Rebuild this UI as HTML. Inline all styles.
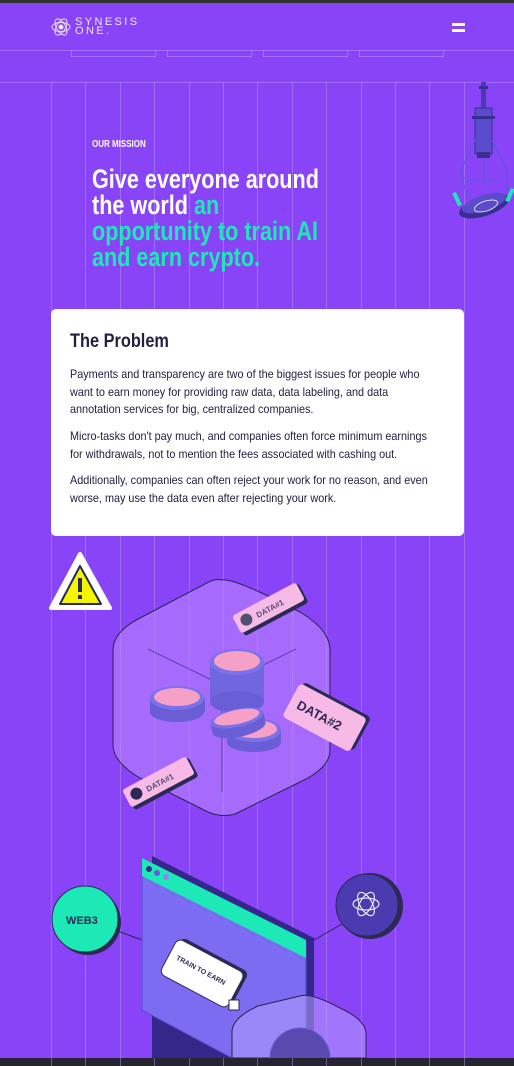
<!DOCTYPE html>
<html><head><meta charset="utf-8">
<style>
*{margin:0;padding:0;box-sizing:border-box}
html,body{width:514px;height:1066px;overflow:hidden;background:#8944f8;font-family:"Liberation Sans",sans-serif}
.abs{position:absolute}
.vl{position:absolute;top:82px;bottom:0;width:1px;background:rgba(190,160,255,.45)}
.hd{transform-origin:0 0;transform:scaleX(.8);white-space:nowrap}
.card{left:51px;top:309px;width:413px;height:227px;background:#fff;border-radius:5px}
.card h2{position:absolute;left:19px;top:22px;font-size:19px;font-weight:bold;color:#232040;transform-origin:0 0;transform:scaleX(.86);white-space:nowrap}
.card p{position:absolute;left:19px;font-size:11.6px;line-height:17.5px;color:#232040;transform-origin:0 0;transform:scaleX(.935);white-space:nowrap}
</style></head><body>
<div class="abs" style="left:0;top:0;width:514px;height:3px;background:#333"></div>
<div class="abs" style="left:0;top:1058px;width:514px;height:8px;background:#262433"></div>
<svg class="abs" style="left:50px;top:16px" width="22" height="22" viewBox="0 0 22 22" fill="none" stroke="#e8ddff" stroke-width="1">
<ellipse cx="11" cy="11" rx="9" ry="4.5"/><ellipse cx="11" cy="11" rx="9" ry="4.5" transform="rotate(60 11 11)"/><ellipse cx="11" cy="11" rx="9" ry="4.5" transform="rotate(120 11 11)"/><circle cx="11" cy="11" r="2" fill="#fff"/></svg>
<div class="abs" style="left:75px;top:18px;color:#eee5ff;font-size:11px;letter-spacing:2.4px;line-height:9px">SYNESIS<br>ONE.</div>
<div class="abs" style="left:452px;top:23px;width:13px;height:3px;background:#fff"></div>
<div class="abs" style="left:452px;top:29px;width:13px;height:3px;background:#fff"></div>
<div class="abs" style="left:0;top:50px;width:514px;height:1px;background:rgba(190,160,255,.5)"></div>
<div class="abs" style="left:71px;top:50px;width:85px;height:7px;border:1px solid rgba(190,160,255,.5);border-top:none"></div>
<div class="abs" style="left:167px;top:50px;width:85px;height:7px;border:1px solid rgba(190,160,255,.5);border-top:none"></div>
<div class="abs" style="left:263px;top:50px;width:85px;height:7px;border:1px solid rgba(190,160,255,.5);border-top:none"></div>
<div class="abs" style="left:359px;top:50px;width:85px;height:7px;border:1px solid rgba(190,160,255,.5);border-top:none"></div>
<div class="abs" style="left:0;top:82px;width:514px;height:1px;background:rgba(190,160,255,.5)"></div>
<div class="vl" style="left:51px"></div><div class="vl" style="left:85px"></div><div class="vl" style="left:120px"></div><div class="vl" style="left:154px"></div><div class="vl" style="left:189px"></div><div class="vl" style="left:223px"></div><div class="vl" style="left:257px"></div><div class="vl" style="left:292px"></div><div class="vl" style="left:326px"></div><div class="vl" style="left:361px"></div><div class="vl" style="left:395px"></div><div class="vl" style="left:429px"></div><div class="vl" style="left:464px"></div>
<svg class="abs" style="left:440px;top:82px" width="74" height="142" viewBox="0 0 74 142">
<rect x="41" y="0" width="5" height="26" fill="#4a3cb0"/><rect x="39" y="4" width="9" height="3" fill="#3a2f90"/>
<rect x="35" y="26" width="17" height="46" fill="#5a4ccc" stroke="#3a2f90"/><rect x="32" y="34" width="23" height="3" fill="#3a2f90"/>
<rect x="37" y="70" width="13" height="6" fill="#3a2f90"/>
<path d="M35 58 L20 90 L28 116 M52 58 L68 90 L66 110 M44 76 L44 106" stroke="#5a5ad8" stroke-width="1.2" fill="none"/>
<path d="M20 90 L26 98 L60 98 L68 90" stroke="#5a5ad8" stroke-width="1" fill="none"/>
<ellipse cx="44" cy="124" rx="26" ry="10" transform="rotate(-18 44 124)" fill="#3a2f90"/>
<ellipse cx="44" cy="121" rx="23" ry="8" transform="rotate(-18 44 121)" fill="#5a4ccc"/>
<ellipse cx="46" cy="124" rx="12" ry="5" transform="rotate(-18 46 124)" fill="none" stroke="#fff" stroke-width=".8"/>
<rect x="15" y="110" width="4" height="14" fill="#1de9b6" transform="rotate(-25 17 117)"/>
<rect x="68" y="106" width="4" height="14" fill="#1de9b6" transform="rotate(25 70 113)"/>
</svg>
<div class="abs hd" style="left:92px;top:139px;color:#fff;font-size:10px;font-weight:bold">OUR MISSION</div>
<div class="abs hd" style="left:92px;top:166px;font-size:27px;font-weight:bold;line-height:26px;color:#fff">Give everyone around<br>the world <span style="color:#1de9b6">an</span><br><span style="color:#1de9b6">opportunity to train AI<br>and earn crypto.</span></div>
<div class="abs card">
<h2>The Problem</h2>
<p style="top:57px">Payments and transparency are two of the biggest issues for people who<br>want to earn money for providing raw data, data labeling, and data<br>annotation services for big, centralized companies.</p>
<p style="top:119px">Micro-tasks don't pay much, and companies often force minimum earnings<br>for withdrawals, not to mention the fees associated with cashing out.</p>
<p style="top:163px">Additionally, companies can often reject your work for no reason, and even<br>worse, may use the data even after rejecting your work.</p>
</div>
<svg class="abs" style="left:0;top:540px" width="514" height="518" viewBox="0 0 514 518">
<path d="M80 14 L51 68 L110 68 Z" fill="#fff" stroke="#fff" stroke-width="4" stroke-linejoin="round"/>
<path d="M80 26 L60 64 L101 64 Z" fill="#f5f500" stroke="#2a2a55" stroke-width="2" stroke-linejoin="round"/>
<rect x="78" y="38" width="4" height="14" fill="#2a2a55"/><rect x="78" y="55" width="4" height="4" fill="#2a2a55"/>
<path d="M222 40 Q235 38 300 72 Q330 90 330 110 L330 210 Q330 228 300 242 L235 274 Q222 278 208 272 L140 238 Q113 222 113 205 L113 110 Q113 92 140 78 L205 44 Q215 38 222 40Z" fill="rgba(190,140,255,.55)" stroke="#2a2250" stroke-width="1"/>
<path d="M148 109 L222 145 L296 109 M222 145 L222 252" stroke="#4a3a8a" stroke-width=".8" fill="none"/>
<g><rect x="210" y="122" width="54" height="40" fill="#7066dd"/><ellipse cx="237" cy="162" rx="27" ry="11" fill="#6a5ed6"/><ellipse cx="237" cy="122" rx="27" ry="13" fill="#7b72ea"/><ellipse cx="237" cy="121" rx="23" ry="10" fill="#f7a0c7"/></g>
<g><rect x="150" y="158" width="55" height="14" fill="#6a5ed6"/><ellipse cx="177" cy="172" rx="27" ry="10" fill="#6a5ed6"/><ellipse cx="177" cy="158" rx="27" ry="12" fill="#7b72ea"/><ellipse cx="177" cy="157" rx="23" ry="9" fill="#f7a0c7"/></g>
<g><rect x="227" y="190" width="54" height="12" fill="#6a5ed6"/><ellipse cx="254" cy="202" rx="27" ry="10" fill="#6a5ed6"/><ellipse cx="254" cy="190" rx="27" ry="12" fill="#7b72ea"/><ellipse cx="254" cy="189" rx="23" ry="9" fill="#f7a0c7"/></g>
<g transform="rotate(-12 237 178)"><rect x="210" y="178" width="54" height="10" fill="#6a5ed6"/><ellipse cx="237" cy="188" rx="27" ry="9" fill="#6a5ed6"/><ellipse cx="237" cy="178" rx="27" ry="9" fill="#7b72ea"/><ellipse cx="237" cy="177" rx="23" ry="7" fill="#f7a0c7"/></g>
<g transform="translate(232,76) rotate(-28)"><rect x="2" y="2" width="72" height="22" rx="3" fill="#2a2a55"/><rect x="0" y="0" width="72" height="20" rx="3" fill="#f7b9e6"/><circle cx="11" cy="10" r="6" fill="#505070"/><text x="22" y="14" font-size="8" font-weight="bold" fill="#505070" font-family="Liberation Sans">DATA#1</text></g>
<g transform="translate(122,250) rotate(-28)"><rect x="2" y="2" width="72" height="22" rx="3" fill="#2a2a55"/><rect x="0" y="0" width="72" height="20" rx="3" fill="#f7b9e6"/><circle cx="11" cy="10" r="6" fill="#2a2a55"/><text x="22" y="14" font-size="8" font-weight="bold" fill="#505070" font-family="Liberation Sans">DATA#1</text></g>
<g transform="translate(300,143) rotate(28)"><rect x="3" y="-3" width="76" height="38" rx="4" fill="#2a2a55"/><rect x="0" y="0" width="76" height="38" rx="4" fill="#f7b9e6"/><text x="8" y="24" font-size="13" font-weight="bold" fill="#2a2a55" font-family="Liberation Sans">DATA#2</text></g>
<line x1="115" y1="390" x2="142" y2="400" stroke="#2a2250"/>
<line x1="314" y1="400" x2="342" y2="384" stroke="#2a2250"/>
<circle cx="88" cy="382" r="33" fill="#2a2a55"/><circle cx="85" cy="379" r="33" fill="#1de9b6" stroke="#2a2a55"/>
<text x="66" y="384" font-size="11" font-weight="bold" fill="#2a2a55" font-family="Liberation Sans">WEB3</text>
<circle cx="370" cy="366" r="33" fill="#2a2a55"/><circle cx="367" cy="365" r="31" fill="#4b3bb0" stroke="#2a2a55"/>
<g fill="none" stroke="#fff" stroke-width="1"><ellipse cx="366" cy="364" rx="13" ry="6"/><ellipse cx="366" cy="364" rx="13" ry="6" transform="rotate(60 366 364)"/><ellipse cx="366" cy="364" rx="13" ry="6" transform="rotate(120 366 364)"/></g>
<path d="M152 316 L314 398 L314 518 L152 518 Z" fill="#33288a"/>
<path d="M142 320 L306 402 L306 518 L232 518 L142 470 Z" fill="#7b6cf2" stroke="#5a4ccc"/>
<path d="M142 318 L306 400 L306 418 L142 336 Z" fill="#1de9b6"/>
<circle cx="149" cy="329" r="3" fill="#3a2f90"/><circle cx="157" cy="333" r="3" fill="#6a5ed6"/><circle cx="166" cy="337" r="3" fill="#9a7cf8"/>
<g transform="translate(178,398) rotate(28)"><rect x="3" y="-3" width="76" height="40" rx="6" fill="#2a2a55"/><rect x="0" y="0" width="76" height="40" rx="6" fill="#fff" stroke="#2a2a55"/><text x="8" y="20" font-size="7" font-weight="bold" fill="#2a2a55" font-family="Liberation Sans">TRAIN TO EARN</text></g>
<rect x="229" y="460" width="10" height="10" fill="#fff" stroke="#2a2a55"/>
<path d="M300 456 Q310 452 340 468 Q366 480 366 494 L366 518 L232 518 L232 492 Q232 478 258 466 Z" fill="rgba(180,160,255,.55)" stroke="#2a2250"/>
<circle cx="300" cy="518" r="30" fill="#5a4ab0" stroke="#6a5ed6"/>
</svg>
</body></html>
